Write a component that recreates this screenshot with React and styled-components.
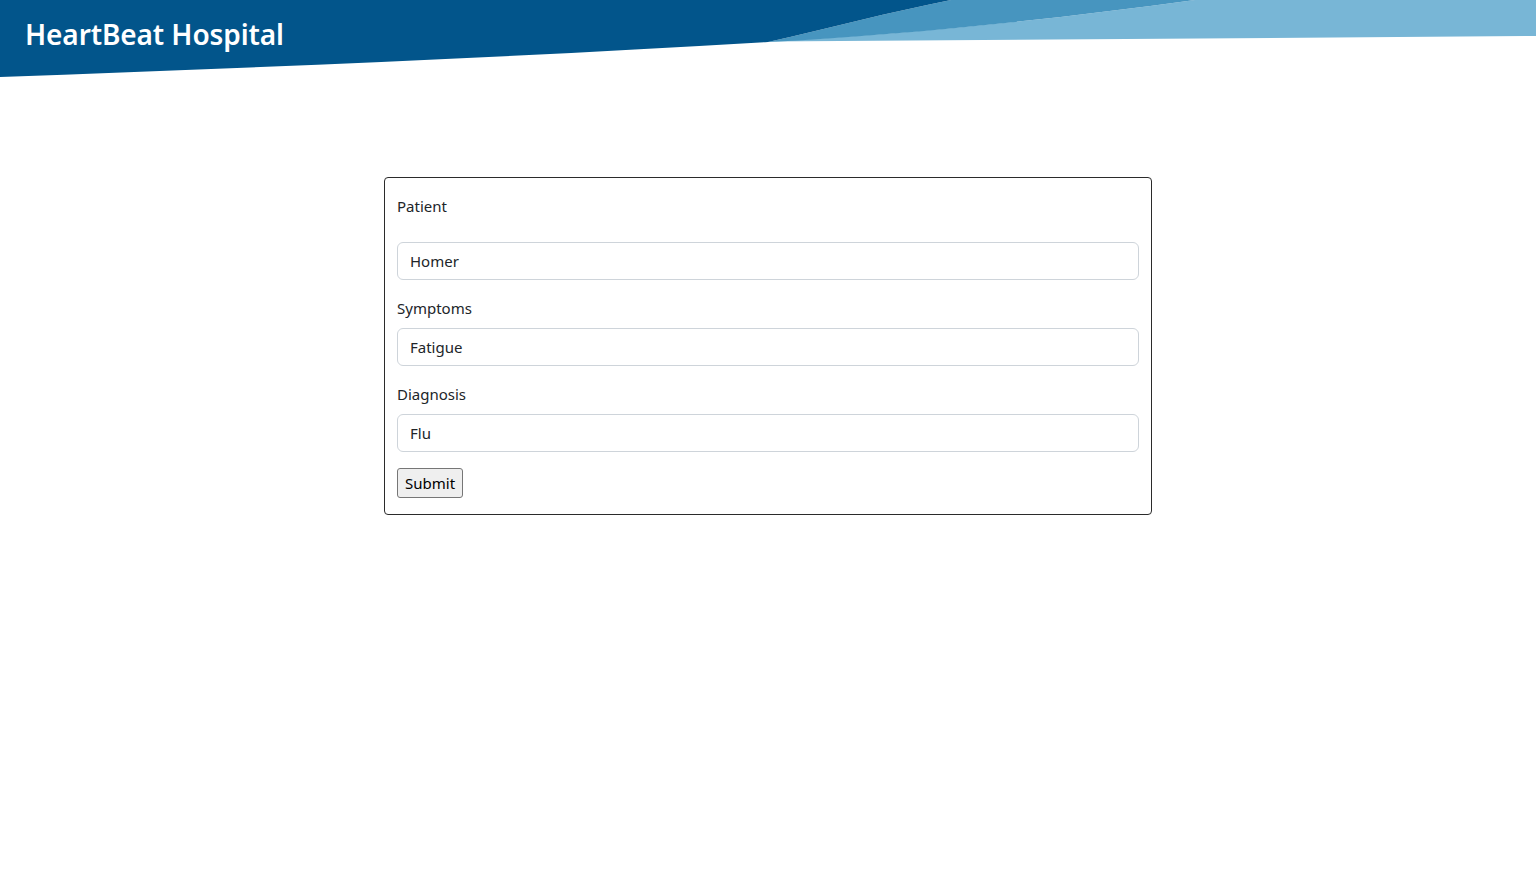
import React from 'react';
import styled, { createGlobalStyle } from 'styled-components';

const GlobalStyle = createGlobalStyle`
  body {
    margin: 0;
    background: #fff;
    color: #212529;
    font-family: "Noto Sans", "Open Sans", sans-serif;
    font-size: 15px;
    line-height: 24px;
  }
  * { box-sizing: border-box; }
`;

const Header = styled.header`
  position: relative;
  height: 78px;
  padding: 16px 25px 0;
`;

const Wave = styled.svg`
  position: absolute;
  top: 0;
  left: 0;
  width: 100%;
  height: 78px;
`;

const Title = styled.h1`
  position: relative;
  margin: 0;
  color: #fff;
  font-size: 28px;
  font-weight: 600;
  line-height: 36px;
  letter-spacing: -0.1px;
`;

const Main = styled.main`
  display: flex;
  justify-content: center;
  padding-top: 99px;
`;

const Card = styled.form`
  width: 768px;
  border: 1px solid #2b2b2b;
  border-radius: 4px;
  padding: 16px 12px 16px;
`;

const Field = styled.div`
  margin-bottom: 16px;
`;

const Label = styled.label`
  display: block;
  margin-bottom: ${(p) => (p.$spaced ? '24px' : '8px')};
`;

const Input = styled.input`
  display: block;
  width: 100%;
  height: 38px;
  padding: 6px 12px;
  border: 1px solid #ced4da;
  border-radius: 6px;
  font: inherit;
  color: #212529;
  background: #fff;
`;

const Button = styled.button`
  height: 30px;
  padding: 1px 7px;
  border: 1px solid #767676;
  border-radius: 3px;
  background: #efefef;
  color: #000;
  font: inherit;
  line-height: 24px;
`;

const fields = [
  { label: 'Patient', value: 'Homer', spaced: true },
  { label: 'Symptoms', value: 'Fatigue' },
  { label: 'Diagnosis', value: 'Flu' },
];

const App = () => (
  <>
    <GlobalStyle />
    <Header>
      <Wave viewBox="0 0 1536 78" preserveAspectRatio="none">
        <path d="M1195 0 H1536 V36 L768 41.5 C900 35 1050 20 1195 0 Z" fill="#78b6d6" />
        <path d="M951 0 H1195 C1050 20 900 35 768 42 C830 28 890 12 951 0 Z" fill="#4795bf" />
        <path d="M0 0 H951 C890 12 830 28 768 42 C500 58 250 68 0 77 Z" fill="#02558b" />
      </Wave>
      <Title>HeartBeat Hospital</Title>
    </Header>
    <Main>
      <Card onSubmit={(e) => e.preventDefault()}>
        {fields.map((f) => (
          <Field key={f.label}>
            <Label $spaced={f.spaced}>{f.label}</Label>
            <Input defaultValue={f.value} />
          </Field>
        ))}
        <Button type="submit">Submit</Button>
      </Card>
    </Main>
  </>
);

export default App;
